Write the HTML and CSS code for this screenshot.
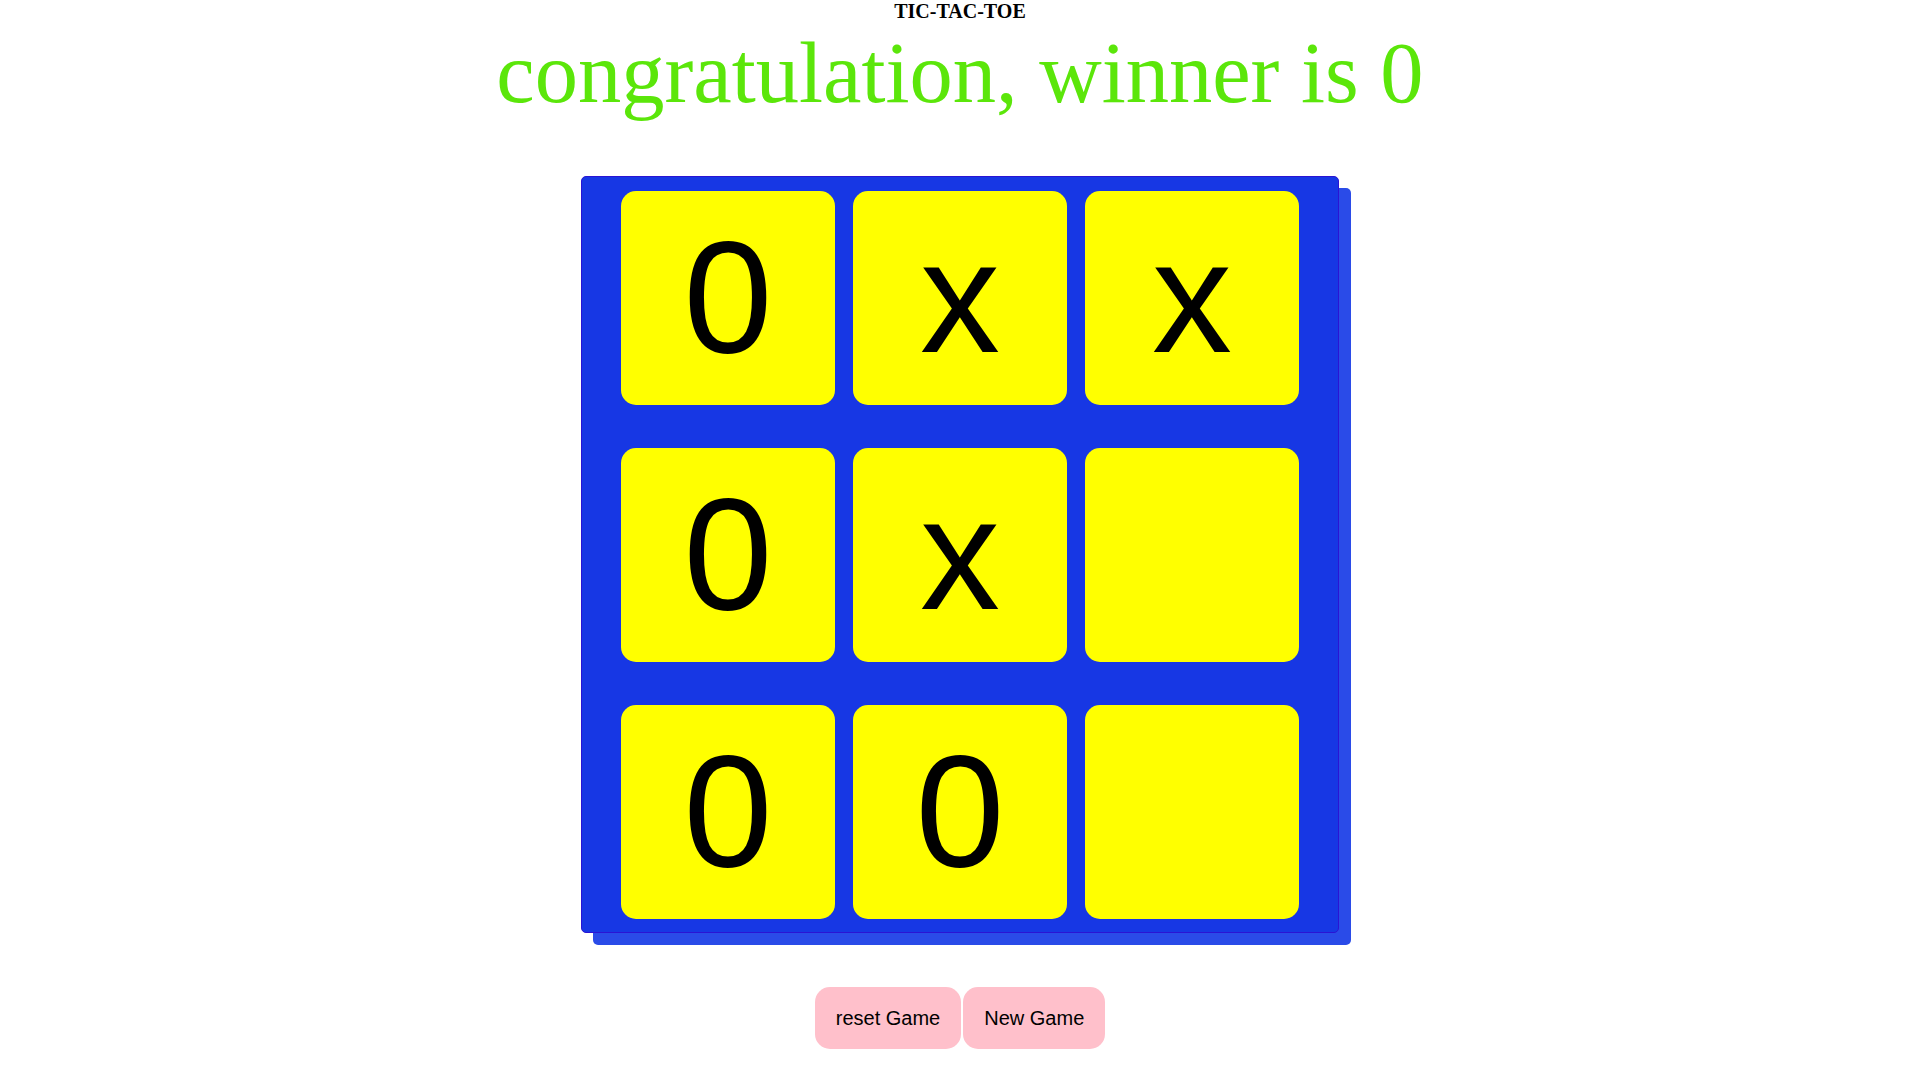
FILE: index.html
```html
<!DOCTYPE html>
<html lang="en">
<head>
<meta charset="utf-8">
<title>Tic-Tac-Toe</title>
<link rel="stylesheet" href="styles.css">
</head>
<body>
  <h1 class="title">TIC-TAC-TOE</h1>
  <h2 class="status">congratulation, winner is 0</h2>
  <main class="board">
    <button class="cell">0</button>
    <button class="cell">x</button>
    <button class="cell">x</button>
    <button class="cell">0</button>
    <button class="cell">x</button>
    <button class="cell"></button>
    <button class="cell">0</button>
    <button class="cell">0</button>
    <button class="cell"></button>
  </main>
  <div class="actions">
    <button class="action">reset Game</button>
    <button class="action">New Game</button>
  </div>
</body>
</html>
```
FILE: styles.css
```css
html, body {
  margin: 0;
  padding: 0;
  background: #ffffff;
}

body {
  font-family: "Liberation Serif", "Times New Roman", serif;
  color: #000;
}

.title {
  margin: 0;
  font-size: 20px;
  line-height: 22px;
  font-weight: bold;
  text-align: center;
}

.status {
  margin: 2px 0 0;
  font-size: 86.5px;
  line-height: 99px;
  font-weight: normal;
  color: #5be60a;
  text-align: center;
}

.board {
  box-sizing: border-box;
  width: 758px;
  height: 757px;
  margin: 53px auto 0;
  padding: 14px 39px 13px;
  border: 1px solid #2a14d4;
  border-radius: 5px;
  background: #1737e4;
  box-shadow: 12px 12px 0 #2a4be8;
  display: grid;
  grid-template-columns: repeat(3, 214px);
  grid-template-rows: repeat(3, 214px);
  column-gap: 18px;
  row-gap: 43px;
}

.cell {
  width: 214px;
  height: 214px;
  padding: 0 0 3px;
  border: none;
  border-radius: 15px;
  background: #ffff00;
  color: #000;
  font-family: "Liberation Sans", Arial, sans-serif;
  font-size: 160px;
  line-height: normal;
  display: flex;
  align-items: center;
  justify-content: center;
}

.actions {
  margin-top: 54px;
  display: flex;
  justify-content: center;
  gap: 2px;
}

.action {
  height: 62px;
  padding: 0 21px;
  border: none;
  border-radius: 15px;
  background: #ffc0cb;
  color: #000;
  font-family: "Liberation Sans", Arial, sans-serif;
  font-size: 20px;
}
```
